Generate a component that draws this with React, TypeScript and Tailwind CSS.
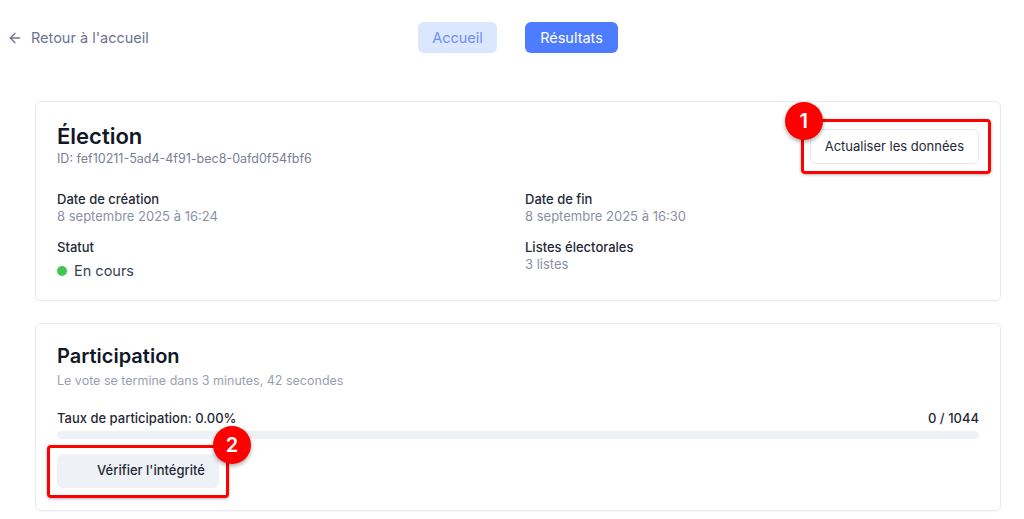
import { ArrowLeft } from 'lucide-react';

const font = { fontFamily: 'Inter, "Noto Sans", sans-serif' };

function Marker({ n, className }: { n: string; className: string }) {
  return (
    <span
      className={`absolute z-20 flex h-[38px] w-[38px] items-center justify-center rounded-full bg-[#f00] text-[20px] font-semibold text-white shadow-[0_2px_4px_rgba(0,0,0,0.35)] ${className}`}
    >
      {n}
    </span>
  );
}

export default function App() {
  return (
    <div className="min-h-[519px] bg-white text-[#1f2937]" style={font}>
      {/* Top nav */}
      <div className="flex items-center pl-[7px] pt-[22px]">
        <a href="#" className="flex w-[411px] items-center gap-[8px] text-[14.5px] text-[#6b7390]">
          <ArrowLeft size={16} strokeWidth={2} />
          <span>Retour à l'accueil</span>
        </a>
        <div className="flex gap-[28px]">
          <button className="h-[31px] w-[79px] rounded-md bg-[#dbe7ff] text-[14.5px] text-[#6d8ff5]">Accueil</button>
          <button className="h-[31px] w-[93px] rounded-md bg-[#4e7cff] text-[14.5px] text-white">Résultats</button>
        </div>
      </div>

      <div className="ml-[35px] mr-[23px] mt-[48px] flex flex-col gap-[22px]">
        {/* Election card */}
        <div className="rounded-md border border-[#e8eaee] px-[21px] pb-[19px] pt-[20px] shadow-[0_1px_2px_rgba(0,0,0,0.04)]">
          <div className="flex items-start justify-between">
            <div>
              <h1 className="text-[22px] font-semibold leading-[28px] text-[#111827]">Élection</h1>
              <p className="text-[12.5px] leading-[18px] text-[#7a8093]">ID: fef10211-5ad4-4f91-bec8-0afd0f54fbf6</p>
            </div>
            <div className="relative mt-[7px]">
              <button className="h-[35px] rounded-md border border-[#e6e8ec] bg-white px-[14px] text-[13px] text-[#1f2937]">
                Actualiser les données
              </button>
              <span className="pointer-events-none absolute -bottom-[10px] -left-[9px] -right-[12px] -top-[10px] z-10 rounded-[4px] border-[3px] border-[#f00] shadow-[0_1px_3px_rgba(0,0,0,0.3)]" />
              <Marker n="1" className="-left-[25px] -top-[27px]" />
            </div>
          </div>

          <div className="mt-[22px] grid grid-cols-2 gap-x-[14px] gap-y-[14px]">
            <div>
              <div className="text-[13px] font-medium leading-[18px]">Date de création</div>
              <div className="text-[13px] leading-[16px] text-[#8a90a4]">8 septembre 2025 à 16:24</div>
            </div>
            <div>
              <div className="text-[13px] font-medium leading-[18px]">Date de fin</div>
              <div className="text-[13px] leading-[16px] text-[#8a90a4]">8 septembre 2025 à 16:30</div>
            </div>
            <div>
              <div className="text-[13px] font-medium leading-[18px]">Statut</div>
              <div className="mt-[5px] flex items-center gap-[7px] text-[14.5px] leading-[20px] text-[#374151]">
                <span className="h-[10px] w-[10px] rounded-full bg-[#3fc74f]" />
                En cours
              </div>
            </div>
            <div>
              <div className="text-[13px] font-medium leading-[18px]">Listes électorales</div>
              <div className="text-[13px] leading-[16px] text-[#8a90a4]">3 listes</div>
            </div>
          </div>
        </div>

        {/* Participation card */}
        <div className="rounded-md border border-[#e8eaee] px-[21px] pb-[22px] pt-[18px] shadow-[0_1px_2px_rgba(0,0,0,0.04)]">
          <h2 className="text-[20px] font-semibold leading-[28px] text-[#111827]">Participation</h2>
          <p className="mt-[2px] text-[12.5px] leading-[18px] text-[#9aa0b2]">Le vote se termine dans 3 minutes, 42 secondes</p>

          <div className="mt-[19px] flex justify-between text-[13px] font-medium leading-[18px]">
            <span>Taux de participation: 0.00%</span>
            <span>0 / 1044</span>
          </div>
          <div className="mt-[4px] h-[8px] w-full rounded-full bg-[#eef2f7]" />

          <div className="relative mt-[15px] inline-block">
            <button className="h-[34px] w-[162px] rounded-md bg-[#eef1f6] pl-[26px] text-[13px] font-medium text-[#1f2937]">
              Vérifier l'intégrité
            </button>
            <span className="pointer-events-none absolute -bottom-[10px] -left-[10px] -right-[10px] -top-[9px] z-10 rounded-[4px] border-[3px] border-[#f00] shadow-[0_1px_3px_rgba(0,0,0,0.3)]" />
            <Marker n="2" className="-right-[32px] -top-[28px]" />
          </div>
        </div>
      </div>
    </div>
  );
}
